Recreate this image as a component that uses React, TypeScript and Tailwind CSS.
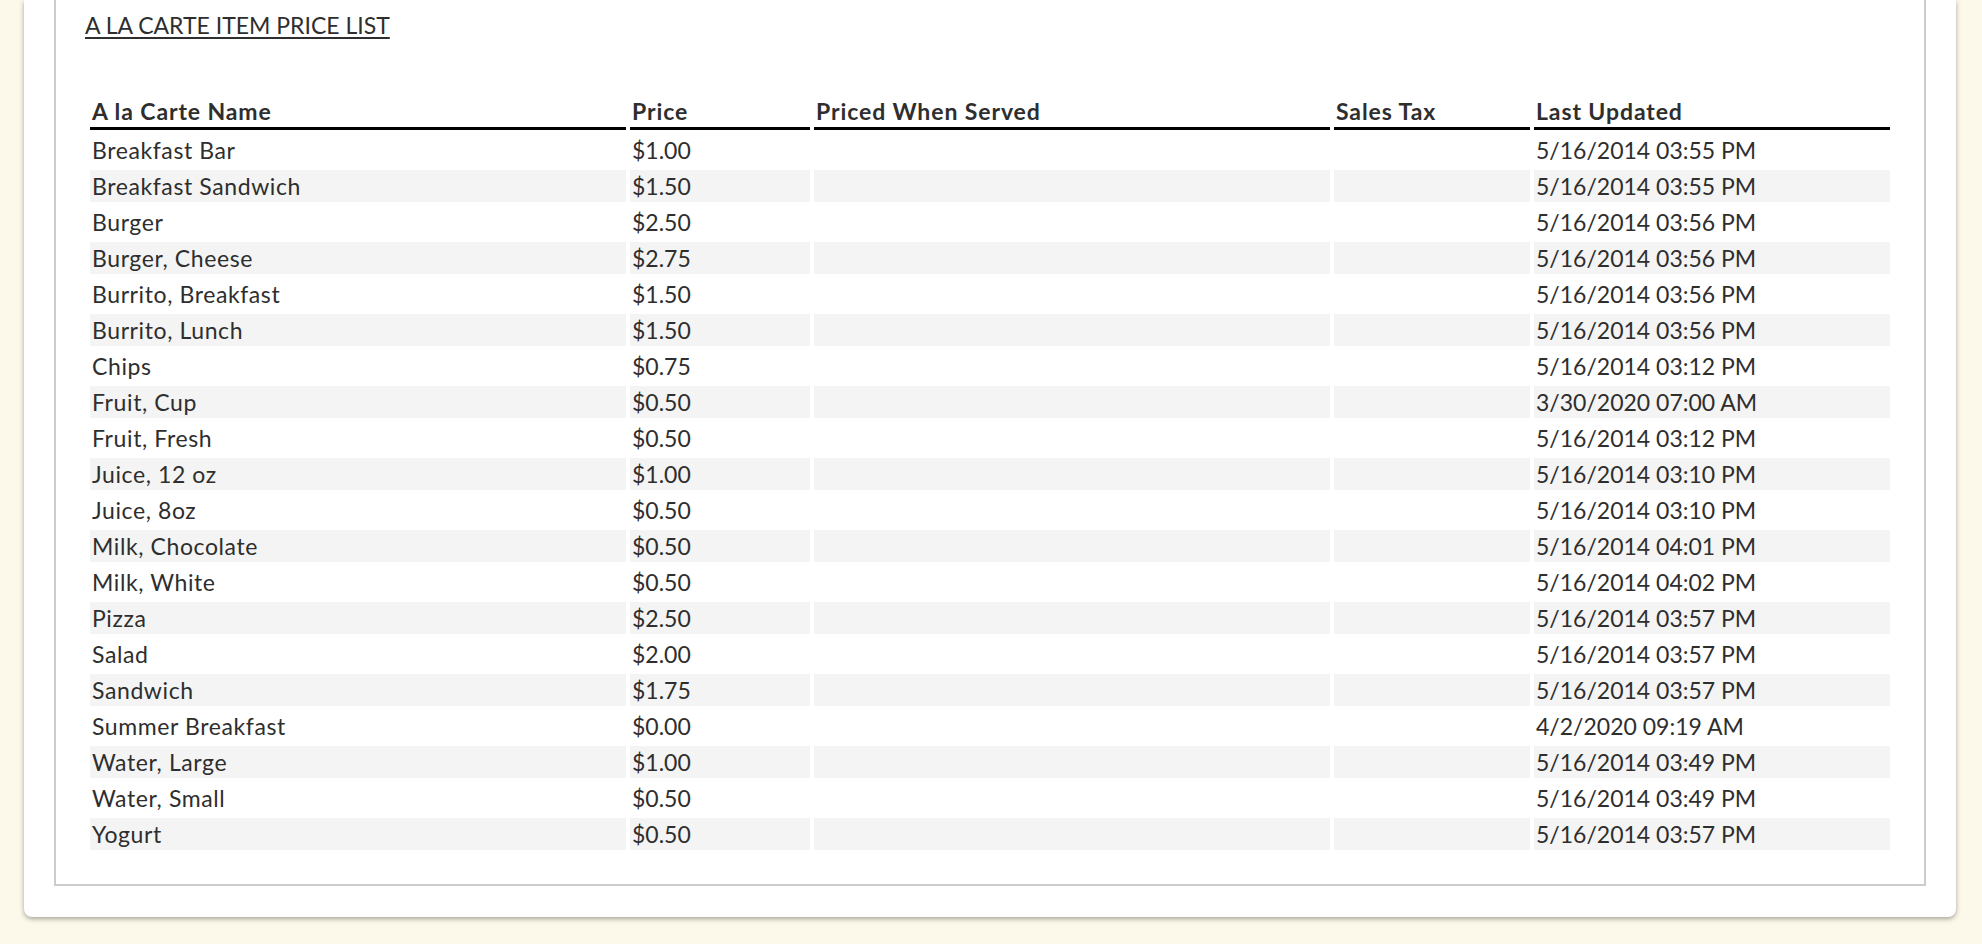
const rows: [string, string, string][] = [
  ["Breakfast Bar", "$1.00", "5/16/2014 03:55 PM"],
  ["Breakfast Sandwich", "$1.50", "5/16/2014 03:55 PM"],
  ["Burger", "$2.50", "5/16/2014 03:56 PM"],
  ["Burger, Cheese", "$2.75", "5/16/2014 03:56 PM"],
  ["Burrito, Breakfast", "$1.50", "5/16/2014 03:56 PM"],
  ["Burrito, Lunch", "$1.50", "5/16/2014 03:56 PM"],
  ["Chips", "$0.75", "5/16/2014 03:12 PM"],
  ["Fruit, Cup", "$0.50", "3/30/2020 07:00 AM"],
  ["Fruit, Fresh", "$0.50", "5/16/2014 03:12 PM"],
  ["Juice, 12 oz", "$1.00", "5/16/2014 03:10 PM"],
  ["Juice, 8oz", "$0.50", "5/16/2014 03:10 PM"],
  ["Milk, Chocolate", "$0.50", "5/16/2014 04:01 PM"],
  ["Milk, White", "$0.50", "5/16/2014 04:02 PM"],
  ["Pizza", "$2.50", "5/16/2014 03:57 PM"],
  ["Salad", "$2.00", "5/16/2014 03:57 PM"],
  ["Sandwich", "$1.75", "5/16/2014 03:57 PM"],
  ["Summer Breakfast", "$0.00", "4/2/2020 09:19 AM"],
  ["Water, Large", "$1.00", "5/16/2014 03:49 PM"],
  ["Water, Small", "$0.50", "5/16/2014 03:49 PM"],
  ["Yogurt", "$0.50", "5/16/2014 03:57 PM"],
];

const headers = [
  { label: "A la Carte Name", w: "w-[536px]" },
  { label: "Price", w: "w-[180px]" },
  { label: "Priced When Served", w: "w-[516px]" },
  { label: "Sales Tax", w: "w-[196px]" },
  { label: "Last Updated", w: "w-[356px]" },
];

export default function App() {
  return (
    <div className="min-h-[944px] bg-[#fdf9ea] pb-[28px] font-['Lato',sans-serif] text-[#2e2e2e]">
      <div className="mx-[24px] w-[1932px] rounded-b-[8px] bg-white px-[30px] pb-[31px] shadow-[0_2px_5px_rgba(0,0,0,0.35)]">
        <div className="border-x-2 border-b-2 border-[#ccc] px-[30px] pb-[30px]">
          <h2 className="pt-[9px] text-[23px] leading-[32px] underline decoration-[2px] underline-offset-[3px] -ml-[1px]">
            A LA CARTE ITEM PRICE LIST
          </h2>
          <table className="mt-[50px] border-separate border-spacing-[4px] text-[23px] leading-[32px]">
            <thead>
              <tr>
                {headers.map((h) => (
                  <th key={h.label} className={`${h.w} border-b-[3px] border-black px-[2px] text-left font-bold tracking-[0.9px]`}>
                    {h.label}
                  </th>
                ))}
              </tr>
            </thead>
            <tbody>
              {rows.map(([name, price, updated], i) => {
                const bg = i % 2 === 1 ? "bg-[#f4f4f4]" : "";
                return (
                  <tr key={name}>
                    <td className={`${bg} px-[2px] tracking-[0.6px]`}>{name}</td>
                    <td className={`${bg} px-[2px]`}>{price}</td>
                    <td className={`${bg} px-[2px]`}></td>
                    <td className={`${bg} px-[2px]`}></td>
                    <td className={`${bg} px-[2px]`}>{updated}</td>
                  </tr>
                );
              })}
            </tbody>
          </table>
        </div>
      </div>
    </div>
  );
}
